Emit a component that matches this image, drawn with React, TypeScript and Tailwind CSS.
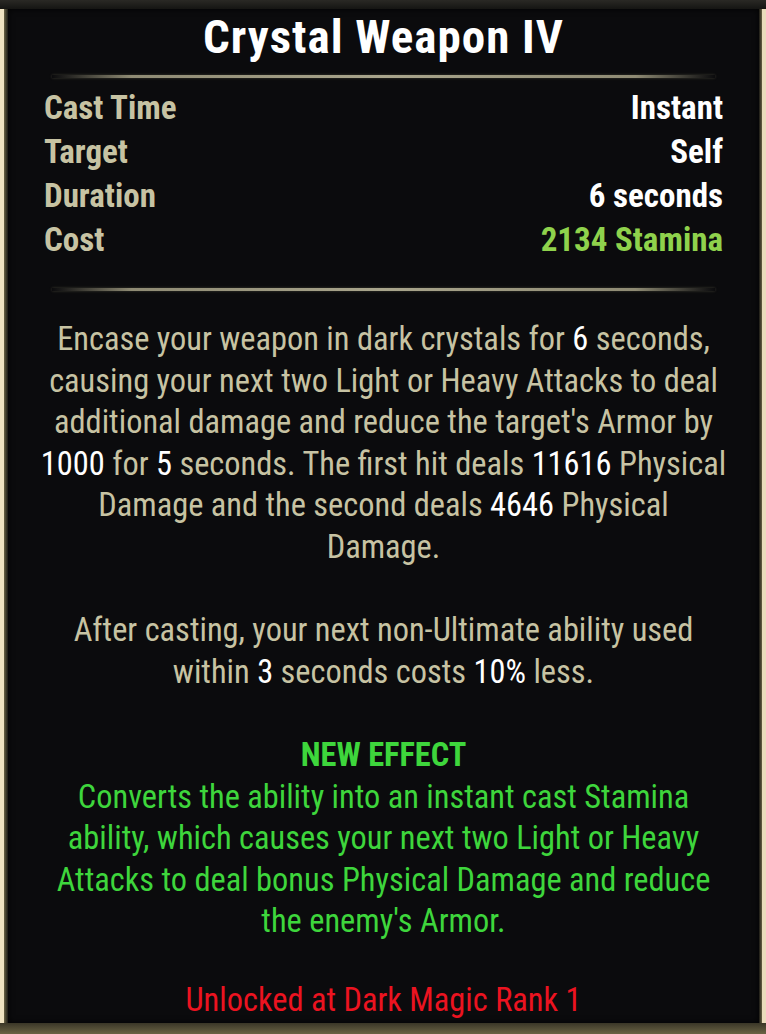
function Divider() {
  return (
    <div className="mx-[44px] h-[3px] bg-[linear-gradient(90deg,rgba(150,146,120,0)_0%,#8f8b74_12%,#a9a58c_50%,#8f8b74_88%,rgba(150,146,120,0)_100%)] shadow-[0_0_3px_rgba(160,155,120,0.35)]" />
  );
}

function Row({ label, value, valueClass }: { label: string; value: string; valueClass: string }) {
  return (
    <div className="flex h-[44px] items-center justify-between">
      <span className="text-[#c7c3a3]">{label}</span>
      <span className={valueClass}>{value}</span>
    </div>
  );
}

function W({ children }: { children: React.ReactNode }) {
  return <span className="text-white">{children}</span>;
}

export default function App() {
  return (
    <div className="flex h-[1034px] w-[766px] flex-col overflow-hidden bg-[#5c553a] font-['Roboto_Condensed',sans-serif]">
      <div className="h-[9px] shrink-0 bg-[linear-gradient(180deg,#2a2925,#151513)]" />
      <div className="flex min-h-0 flex-1">
        <div className="flex w-[8px] shrink-0">
          <div className="w-[4px] bg-[#efe2c1]" />
          <div className="w-[4px] bg-[linear-gradient(90deg,#6b6446,#1a1915)]" />
        </div>
        <div className="flex flex-1 flex-col bg-[#0b0b0d] shadow-[inset_0_0_6px_rgba(0,0,0,0.9)]">
          <div className="pt-[4px] text-center text-[47px] leading-[48px] font-bold tracking-[1px] text-white">Crystal Weapon IV</div>
          <div className="mt-[14px]">
            <Divider />
          </div>
          <div className="mt-[8px] px-[36px] text-[33px] font-bold">
            <Row label="Cast Time" value="Instant" valueClass="text-white" />
            <Row label="Target" value="Self" valueClass="text-white" />
            <Row label="Duration" value="6 seconds" valueClass="text-white" />
            <Row label="Cost" value="2134 Stamina" valueClass="text-[#8fd24c]" />
          </div>
          <div className="mt-[26px]">
            <Divider />
          </div>
          <div className="mt-[28px] flex flex-col items-center whitespace-nowrap text-[32.4px] leading-[41.6px] text-[#c7c3a3]">
            <div>
              Encase your weapon in dark crystals for <W>6</W> seconds,
            </div>
            <div>causing your next two Light or Heavy Attacks to deal</div>
            <div>additional damage and reduce the target's Armor by</div>
            <div>
              <W>1000</W> for <W>5</W> seconds. The first hit deals <W>11616</W> Physical
            </div>
            <div>
              Damage and the second deals <W>4646</W> Physical
            </div>
            <div>Damage.</div>
            <div className="h-[41.6px]" />
            <div>After casting, your next non-Ultimate ability used</div>
            <div>
              within <W>3</W> seconds costs <W>10%</W> less.
            </div>
            <div className="h-[41.6px]" />
            <div className="font-bold text-[#3ed63c]">NEW EFFECT</div>
            <div className="text-[#3ed63c]">Converts the ability into an instant cast Stamina</div>
            <div className="text-[#3ed63c]">ability, which causes your next two Light or Heavy</div>
            <div className="text-[#3ed63c]">Attacks to deal bonus Physical Damage and reduce</div>
            <div className="text-[#3ed63c]">the enemy's Armor.</div>
            <div className="h-[36.6px]" />
            <div className="text-[#ec1320]">Unlocked at Dark Magic Rank 1</div>
          </div>
        </div>
        <div className="flex w-[7px] shrink-0">
          <div className="w-[3px] bg-[linear-gradient(90deg,#1a1915,#6b6446)]" />
          <div className="w-[4px] bg-[#eadcbc]" />
        </div>
      </div>
      <div className="h-[11px] shrink-0 bg-[linear-gradient(180deg,#3a3627,#6a6344)]" />
    </div>
  );
}
